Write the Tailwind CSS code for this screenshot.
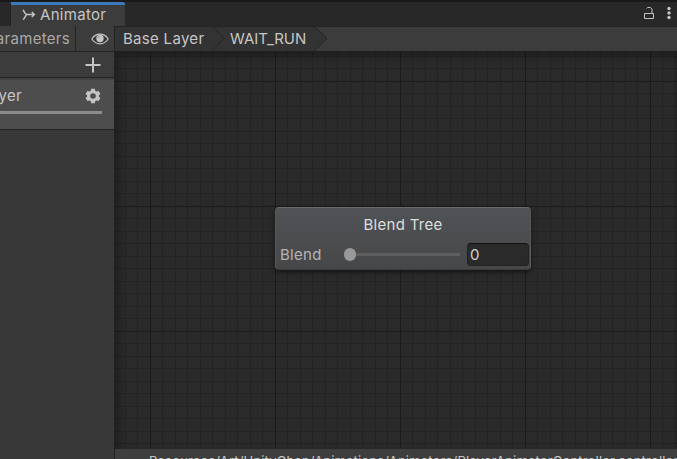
<!DOCTYPE html>
<html lang="en">
<head>
<meta charset="utf-8">
<title>Animator</title>
<script src="https://cdn.jsdelivr.net/npm/@tailwindcss/browser@4"></script>
</head>
<body class="w-[677px] h-[459px] overflow-hidden bg-[#282828] font-['Inter',sans-serif] text-[15px] leading-[20px] tracking-[0.3px] text-[#c6c6c6] flex flex-col whitespace-nowrap">
  <!-- Tab strip -->
  <header class="h-[26px] shrink-0 flex items-start border-t-2 border-[#191919] bg-[#282828]">
    <div class="ml-[10px] w-[115px] h-6 bg-[#3c3c3c] border-t-[3px] border-[#3a79bb] rounded-t-[2px] flex items-start border-l border-l-[#202020]">
      <svg class="ml-[11px] mt-[4px] shrink-0" width="14" height="12" viewBox="0 0 14 12" fill="none" stroke="#c4c4c4" stroke-width="1.500"><path d="M1.200.8C2.200 3.500 3.500 5.500 5.500 5.500H12M1 10.500C2.500 9.500 3 7.500 4.500 5.800M9.800 3 12.300 5.500 9.800 8"/></svg>
      <span class="ml-[4px]">Animator</span>
    </div>
    <div class="ml-auto flex items-start pr-[5px]">
      <svg class="mt-[4px]" width="12" height="14" viewBox="0 0 12 14" fill="none" stroke="#c4c4c4" stroke-width="1"><path d="M1.500 7.500h9v5h-9zM3.500 2.500l1-1h3l1.500 1.500V7"/></svg>
      <svg class="ml-[12px] mt-[4px]" width="5" height="14" viewBox="0 0 5 14" fill="#c4c4c4"><circle cx="2" cy="2.500" r="1.700"/><circle cx="2" cy="7" r="1.700"/><circle cx="2" cy="11.500" r="1.700"/></svg>
    </div>
  </header>

  <div class="flex flex-1 min-h-0">
    <!-- Layers and parameters -->
    <aside class="w-[115px] shrink-0 bg-[#383838] border-r border-[#222] flex flex-col">
      <div class="h-[26px] bg-[#3c3c3c] border-b border-[#232323] flex">
        <div class="w-[76px] border-r border-[#232323] flex justify-end items-center pr-[5px] text-[#a9a9a9]"><span>Parameters</span></div>
        <div class="flex-1 flex items-center justify-end pr-[5px]">
          <svg width="18" height="12" viewBox="0 0 18 12"><path d="M.8 6C5-.4 13-.4 17.200 6 13 12.400 5 12.400.8 6z" fill="none" stroke="#c4c4c4" stroke-width="1.200"/><circle cx="9" cy="5.500" r="3.700" fill="#c4c4c4"/><path d="M7 4.500 8.300 3.200" stroke="#777" stroke-width="1"/></svg>
        </div>
      </div>
      <div class="h-[26px] bg-[#3c3c3c] border-b border-[#232323] flex items-center justify-end pr-[13px]">
        <svg width="16" height="16" viewBox="0 0 16 16" stroke="#c4c4c4" stroke-width="2"><path d="M8 .5v15M.5 8h15"/></svg>
      </div>
      <div class="h-[52px] bg-[#4d4d4d] border-t-2 border-t-[#414141] border-b border-b-[#232323]">
        <div class="h-[31px] flex items-center justify-between pr-[13px] pt-[1px]">
          <span class="w-[22px] flex justify-end">Base Layer</span>
          <svg width="16" height="16" viewBox="0 0 16 16"><path fill="#c4c4c4" fill-rule="evenodd" d="M6.200.8h3.600l.5 2.100 1.200.7 2.100-.6 1.800 3.100L13.800 7.600v.8l1.600 1.500-1.800 3.100-2.100-.6-1.200.7-.5 2.100H6.200l-.5-2.100-1.200-.7-2.100.6L.6 9.900 2.200 8.400v-.8L.6 6.100 2.400 3l2.100.6 1.200-.7zM8 5.200a2.800 2.800 0 1 0 0 5.600 2.800 2.800 0 0 0 0-5.600z"/></svg>
        </div>
        <div class="w-[102px] h-[3px] bg-[#8b8b8b]"></div>
      </div>
    </aside>

    <main class="flex-1 min-w-0 flex flex-col">
      <!-- Breadcrumbs -->
      <nav class="relative h-[26px] shrink-0 bg-[#3c3c3c] border-b border-[#202020]">
        <svg class="absolute left-0 top-0" width="562" height="25" viewBox="0 0 562 25"><path fill="#333" d="M0 0H199L212 12.500 199 25H0z"/><path fill="none" stroke="#242424" d="M97 0 109 12.500 97 25M199 0 212 12.500 199 25M0 .5H562"/></svg>
        <div class="relative h-[25px] flex items-center pl-[8px]">
          <span class="w-[107px]">Base Layer</span><span class="tracking-[-0.050px]">WAIT_RUN</span>
        </div>
      </nav>

      <!-- Graph canvas -->
      <section class="relative flex-1 min-h-0 bg-[#2a2a2a]">
        <svg class="absolute inset-0" width="562" height="396" shape-rendering="crispEdges">
          <defs>
            <pattern id="grid" x="35" y="29" width="125" height="125" patternUnits="userSpaceOnUse">
              <path stroke="#232323" d="M12.500 0v125M25.500 0v125M37.500 0v125M50.500 0v125M62.500 0v125M75.500 0v125M87.500 0v125M100.500 0v125M112.500 0v125M0 12.500h125M0 25.500h125M0 37.500h125M0 50.500h125M0 62.500h125M0 75.500h125M0 87.500h125M0 100.500h125M0 112.500h125"/>
              <path stroke="#1b1b1b" d="M.5 0v125M0 .5h125"/>
            </pattern>
          </defs>
          <rect width="562" height="396" fill="url(#grid)"/>
        </svg>
        <div class="absolute inset-0 shadow-[inset_3px_4px_9px_rgba(0,0,0,0.3)]"></div>

        <div class="absolute left-[160px] top-[155px] w-[256px] h-[63px] rounded-[4px] bg-linear-to-b from-[#505356] to-[#464749] border border-[#56585a] border-t-[#696b6e] border-b-[#3b3c3d] shadow-[0_2px_5px_rgba(0,0,0,0.55)]">
          <div class="h-[34px] flex items-center justify-center text-[#dedede]">Blend Tree</div>
          <div class="h-[25px] flex items-center pl-[4px] text-[#b4b4b4]">
            <span class="w-[64px]">Blend</span>
            <span class="w-[12px] h-[13px] rounded-full bg-[#999]"></span>
            <span class="w-[104px] h-[3px] bg-[#5e5e5e]"></span>
            <span class="ml-[7px] w-[62px] h-[23px] rounded-[4px] bg-[#2a2a2a] border border-[#212121] border-t-[#101010] text-[#d2d2d2] pl-[2px] leading-[21px]">0</span>
          </div>
        </div>
      </section>

      <footer class="h-[10px] shrink-0 bg-[#3e3e3e] overflow-hidden pl-[34px] text-[13px] tracking-[0.180px] leading-[16px] pt-[4px]">Resources/Art/UnityChan/Animations/Animators/PlayerAnimatorController.controller</footer>
    </main>
  </div>
</body>
</html>
